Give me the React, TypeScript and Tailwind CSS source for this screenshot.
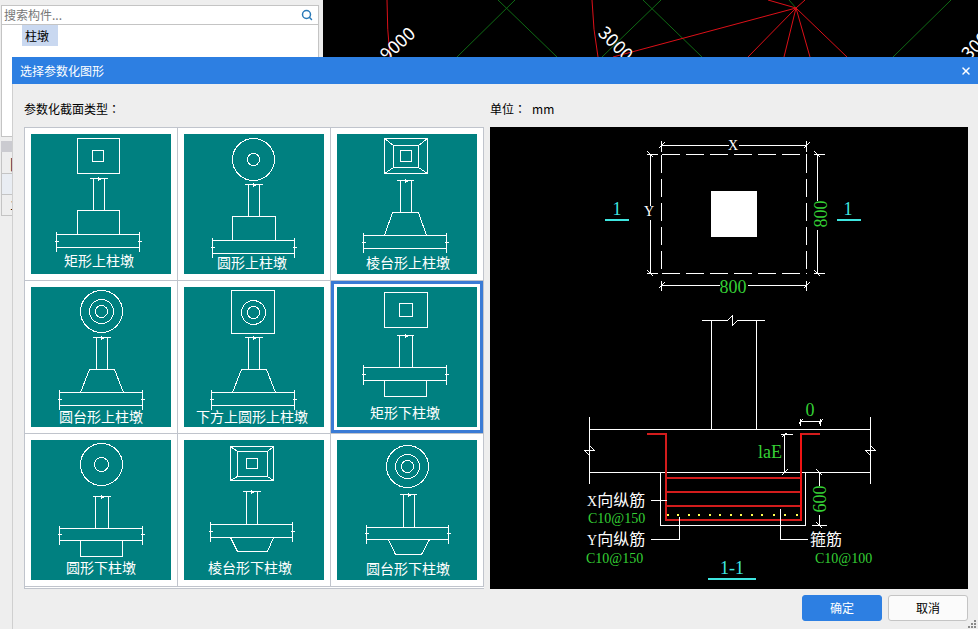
import { useState } from 'react';
import type { ReactNode } from 'react';
import { Search, X } from 'lucide-react';
import clsx from 'clsx';

interface Shape {
  name: string;
  labelY: number;
  labelX: number;
  // plan view, drawn above the section
  circles?: [number, number, number][];
  rects?: [number, number, number, number][];
  corners?: boolean;
  // section: column top line, column sides, slab and pedestal outline
  top: [number, number, number];
  column: [number, number, number];
  slab: [number, number, number, number];
  pier: string;
}

const SHAPES: Shape[] = [
  {
    name: '矩形上柱墩', labelX: 33, labelY: 132,
    rects: [[46, 4, 42, 35], [61, 16, 11, 11]],
    top: [58, 76, 44], column: [62, 73, 76], slab: [25, 108, 100, 113], pier: 'M46 100V76H88V100',
  },
  {
    name: '圆形上柱墩', labelX: 33, labelY: 134,
    circles: [[69, 25, 21], [69, 25, 6]],
    top: [60, 78, 50], column: [64, 75, 82], slab: [28, 110, 106, 119], pier: 'M48 106V82H91V106',
  },
  {
    name: '棱台形上柱墩', labelX: 29, labelY: 134, corners: true,
    rects: [[47, 4, 43, 35], [56, 11, 25, 22], [63, 16, 11, 11]],
    top: [59, 76, 46], column: [63, 74, 78], slab: [26, 109, 101, 114], pier: 'M47 101L55 78H81L89 101',
  },
  {
    name: '圆台形上柱墩', labelX: 28, labelY: 135,
    circles: [[70, 24, 21], [70, 24, 12], [70, 24, 6]],
    top: [61, 79, 50], column: [65, 76, 82], slab: [28, 111, 105, 118], pier: 'M49 105L58 82H83L92 105',
  },
  {
    name: '下方上圆形上柱墩', labelX: 12, labelY: 135,
    rects: [[47, 3, 43, 43]],
    circles: [[69, 25, 12], [69, 25, 6]],
    top: [60, 78, 50], column: [64, 75, 82], slab: [27, 110, 105, 118], pier: 'M48 105L57 82H82L91 105',
  },
  {
    name: '矩形下柱墩', labelX: 33, labelY: 131,
    rects: [[47, 5, 43, 35], [62, 16, 13, 13]],
    top: [59, 76, 48], column: [62, 75, 80], slab: [26, 109, 80, 93], pier: 'M47 93V109H89V93',
  },
  {
    name: '圆形下柱墩', labelX: 35, labelY: 133,
    circles: [[70, 24, 21], [70, 24, 7]],
    top: [61, 79, 56], column: [64, 77, 88], slab: [28, 111, 88, 100], pier: 'M49 100V116H91V100',
  },
  {
    name: '棱台形下柱墩', labelX: 24, labelY: 133, corners: true,
    rects: [[46, 6, 43, 34], [53, 11, 30, 25], [62, 18, 11, 10]],
    top: [58, 76, 51], column: [62, 73, 84], slab: [26, 108, 84, 97], pier: 'M46 97L53 111H83L89 97',
  },
  {
    name: '圆台形下柱墩', labelX: 29, labelY: 134,
    circles: [[70, 26, 21], [70, 26, 12], [70, 26, 6]],
    top: [62, 79, 54], column: [66, 77, 87], slab: [29, 111, 87, 99], pier: 'M51 99L58 114H84L92 99',
  },
];

const REBAR_DOTS = [178, 188, 199, 209, 220, 230, 241, 251, 262, 272, 284, 295, 307];

const btnCls = 'h-[26px] w-20 rounded-[3px] border text-xs';

// Half-pixel shift so that whole coordinates fall on pixel centres
function Crisp({ children }: { children: ReactNode }) {
  return (
    <g transform="translate(0.5 0.5)" fill="none" stroke="#fff" shapeRendering="crispEdges">
      {children}
    </g>
  );
}

function Thumb({ shape }: { shape: Shape }) {
  const { top, column, slab, rects = [], circles = [] } = shape;
  const mid = Math.round((top[0] + top[1]) / 2);
  const slabMid = Math.round((slab[2] + slab[3]) / 2);
  const [a, b] = rects;

  return (
    <svg viewBox="0 0 140 140" className="block h-[140px] w-[140px] bg-[#008080]">
      <Crisp>
        {rects.map(([x, y, w, h]) => (
          <rect key={`${x}-${y}`} x={x} y={y} width={w} height={h} />
        ))}
        {circles.map(([x, y, r]) => (
          <circle key={r} cx={x} cy={y} r={r} />
        ))}
        {shape.corners && (
          <path
            d={`M${a[0]} ${a[1]}L${b[0]} ${b[1]}M${a[0] + a[2]} ${a[1]}L${b[0] + b[2]} ${b[1]}M${a[0]} ${a[1] + a[3]}L${b[0]} ${b[1] + b[3]}M${a[0] + a[2]} ${a[1] + a[3]}L${b[0] + b[2]} ${b[1] + b[3]}`}
          />
        )}
        <path d={`M${top[0]} ${top[2]}H${top[1]}M${mid} ${top[2] - 2}v4M${mid - 1} ${top[2] + 1}h3`} />
        <path d={`M${column[0]} ${top[2]}V${column[2]}M${column[1]} ${top[2]}V${column[2]}`} />
        <path d={`M${slab[0]} ${slab[2]}H${slab[1]}M${slab[0]} ${slab[3]}H${slab[1]}`} />
        <path d={`M${slab[0]} ${slab[2] - 3}V${slab[3] + 4}M${slab[1]} ${slab[2] - 3}V${slab[3] + 4}`} />
        <path d={`M${slab[0] - 2} ${slabMid}h4M${slab[1] - 2} ${slabMid}h4`} />
        <path d={shape.pier} />
      </Crisp>
      <text x={shape.labelX} y={shape.labelY} fill="#fff" className="text-[14px]">
        {shape.name}
      </text>
    </svg>
  );
}

function Preview() {
  return (
    <svg
      viewBox="0 0 478 462"
      className="block h-[462px] w-full font-['Liberation_Serif','Noto_Sans_CJK_SC',serif]"
    >
      <Crisp>
        {/* plan */}
        <path d="M171 27H316M171 146H316M171 27V146M316 27V146" strokeDasharray="18 6" />
        <path d="M171 18H238M248 18H316M171 13V24M316 13V24M168 21L174 15M313 21L319 15" />
        <path d="M160 27V78M160 92V146M156 27H167M156 146H167M157 24L163 30M157 143L163 149" />
        <path d="M327 27V73M327 102V146M323 27H334M323 146H334M324 24L330 30M324 143L330 149" />
        <path d="M171 158H229M257 158H316M171 153V163M316 153V163M168 161L174 155M313 161L319 155" />
        {/* section */}
        <path d="M211 193H237L242 188V198L247 193H274M221 193V302M266 193V302" />
        <path d="M99 302H380M99 345H380M99 289V356M380 289V356" />
        <path d="M99 318L104 323H94L99 328M380 318L385 323H375L380 328" />
        <path d="M170 345V398H315V345" />
        <path d="M310 294H330M310 291V298M330 291V298M308 297L312 292M328 297L332 292" />
        <path d="M294 307V345M290 307H302M292 309L297 305M291 348L297 342" />
        <path d="M329 345V358M329 387V398M321 398H336M326 342L332 348M326 395L332 401" />
      </Crisp>
      <rect x="221" y="64" width="46" height="46" fill="#fff" />

      <g fill="none" stroke="#d31c1c" strokeWidth="2">
        <path d="M157 307H176V393H311" />
        <path d="M311 307H330M176 351H311M176 365H311M176 379H311" />
        <path d="M311 306V394" stroke="#f01414" />
      </g>
      {/* leaders run over the rebar */}
      <Crisp>
        <path d="M160 373H176M160 412H189V389M290 381V412H317" />
      </Crisp>
      <g fill="#ffff50">
        {REBAR_DOTS.map((x) => (
          <rect key={x} x={x - 1} y="387" width="2" height="2" />
        ))}
      </g>

      <g fill="#3fe6e0" className="text-[18px]">
        <text x="127" y="88" textAnchor="middle">1</text>
        <text x="358" y="88" textAnchor="middle">1</text>
        <text x="242" y="447" textAnchor="middle">1-1</text>
        <path d="M115 92h24v2h-24zM347 92h24v2h-24zM218 451h48v2h-48z" />
      </g>
      <g fill="#35cf35" className="text-[18px]">
        <text x="243" y="166" textAnchor="middle">800</text>
        <text transform="translate(337 87) rotate(-90)" textAnchor="middle">800</text>
        <text x="320" y="289" textAnchor="middle">0</text>
        <text x="280" y="331" textAnchor="middle">laE</text>
        <text transform="translate(336 372) rotate(-90)" textAnchor="middle">600</text>
      </g>
      <g fill="#35cf35" className="text-[14px]">
        <text x="98" y="396">C10@150</text>
        <text x="96" y="436">C10@150</text>
        <text x="325" y="436">C10@100</text>
      </g>
      <g fill="#fff" className="text-[14px]">
        <text x="243" y="23" textAnchor="middle">X</text>
        <text x="159" y="89" textAnchor="middle">Y</text>
      </g>
      <g fill="#fff" className="text-[16px]">
        <text x="97" y="379"><tspan className="text-[14px]">X</tspan>向纵筋</text>
        <text x="97" y="418"><tspan className="text-[14px]">Y</tspan>向纵筋</text>
        <text x="320" y="418">箍筋</text>
      </g>
    </svg>
  );
}

function Viewport() {
  return (
    <svg viewBox="0 0 655 60" className="block h-[60px] w-[655px] max-w-none">
      <g stroke="#0f6a14" fill="none">
        <path d="M192 0L134 57M175 0L234 57M320 0L379 57M338 0L279 57M466 0L473 8M628 0L570 57" />
      </g>
      <g stroke="#dc1018" fill="none">
        <path d="M64 0Q64 30 67 57M269 0Q270 30 275 57" />
        <path d="M473 8L290 57M473 8L425 57M473 8L461 57M473 8L487 57M473 8L524 57M473 8L445 0M473 8L482 0" />
      </g>
      <g fill="#fff" className="text-[18px]">
        <text transform="translate(64 62) rotate(-42)">9000</text>
        <text transform="translate(274 34) rotate(45)">3000</text>
        <text transform="translate(646 61) rotate(-45)">3000</text>
      </g>
    </svg>
  );
}

export default function App() {
  const [selected, setSelected] = useState(5);

  return (
    <div className="relative flex min-h-screen overflow-hidden bg-[#eeeeee] font-['Noto_Sans_CJK_SC',sans-serif] text-xs text-black">
      <aside className="w-[319px] shrink-0 pl-px pt-[5px]">
        <div className="h-[132px] border border-[#c4c4c4] bg-white">
          <div className="flex h-[19px] items-center border-b border-[#c4c4c4] pl-0.5 pr-[5px]">
            <input
              type="text"
              aria-label="搜索构件"
              placeholder="搜索构件..."
              className="min-w-0 flex-1 bg-transparent outline-none placeholder:text-[#777]"
            />
            <Search className="h-3 w-3 text-[#2a7ab8]" strokeWidth={3} />
          </div>
          <button className="ml-5 block h-[21px] w-9 bg-[#c9d8f0] pl-[3px] text-left leading-5">柱墩</button>
        </div>
        <div className="mt-1 h-[11px] bg-[#cbcbd0]" />
        <div className="border-l border-[#c4c4c4]">
          <div className="h-[22px] border-b border-[#c4c4c4] pl-2 leading-[21px]">|</div>
          <div className="h-[21px] border-b border-[#c4c4c4] bg-[#e9edf3]" />
          <div className="h-[21px] border-b border-[#c4c4c4] pl-2 leading-5">1</div>
        </div>
      </aside>
      <main className="ml-1 min-w-0 flex-1 overflow-hidden bg-black">
        <Viewport />
      </main>

      <section
        role="dialog"
        aria-labelledby="dialog-title"
        className="absolute bottom-0 left-3 right-0 top-[57px] flex flex-col bg-[#eeeeee]"
      >
        <header className="flex h-[27px] shrink-0 items-center justify-between bg-[#2d7fe2] pl-2 pr-1.5 text-white">
          <h1 id="dialog-title" className="leading-[27px]">选择参数化图形</h1>
          <button aria-label="关闭">
            <X className="h-3 w-3" strokeWidth={3} />
          </button>
        </header>

        <div className="flex flex-1 flex-col border-l border-[#cfcfcf] pl-[11px] pr-2.5 pt-4">
          <div className="flex gap-1.5">
            <div className="w-[460px] shrink-0">
              <h2 className="mb-[9px] leading-[18px]">
                参数化截面类型<span className="font-['Noto_Sans_CJK_TC',sans-serif]" lang="zh-TW">：</span>
              </h2>
              <div className="grid grid-cols-3 border-b border-l border-t border-[#c0c4cc] bg-white pb-px">
                {SHAPES.map((s, i) => (
                  <div key={s.name} className="border-b border-r border-[#c0c4cc]">
                    <button
                      onClick={() => setSelected(i)}
                      aria-pressed={selected === i}
                      className={clsx(
                        'block w-full border-[3px] p-[3px]',
                        selected === i ? 'border-[#3a7bd5]' : 'border-transparent',
                      )}
                    >
                      <Thumb shape={s} />
                    </button>
                  </div>
                ))}
              </div>
            </div>
            <div className="min-w-0 flex-1">
              <p className="mb-[9px] leading-[18px]">
                单位<span className="font-['Noto_Sans_CJK_TC',sans-serif]" lang="zh-TW">：</span>
                <span className="ml-1.5">mm</span>
              </p>
              <div className="bg-black">
                <Preview />
              </div>
            </div>
          </div>
          <footer className="mt-1.5 flex justify-end gap-1.5">
            <button className={clsx(btnCls, 'border-[#2d7fe2] bg-[#2d7fe2] text-white')}>确定</button>
            <button className={clsx(btnCls, 'border-[#c4c4c4] bg-[#fbfbfb]')}>取消</button>
          </footer>
        </div>
        <svg viewBox="0 0 10 10" className="absolute bottom-0 right-0 h-2.5 w-2.5" fill="#8a8a8a">
          <path d="M6 1h2v2h-2zM3 4h2v2h-2zM6 4h2v2h-2zM0 7h2v2h-2zM3 7h2v2h-2zM6 7h2v2h-2z" />
        </svg>
      </section>
    </div>
  );
}
